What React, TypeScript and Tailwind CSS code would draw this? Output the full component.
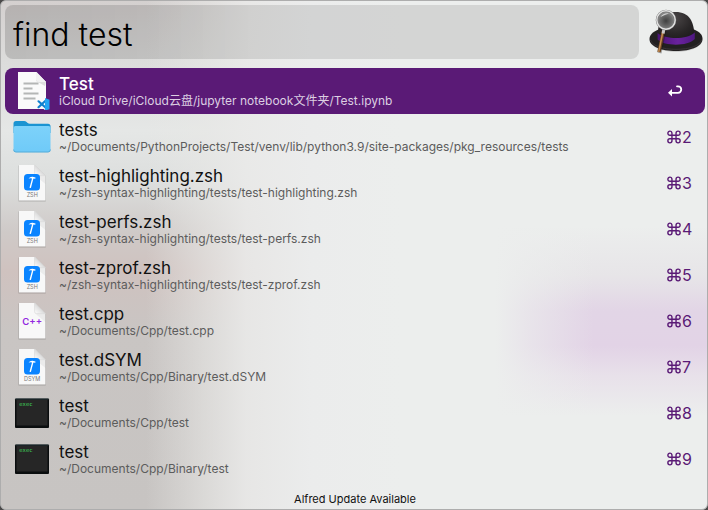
import { useState, type ReactNode } from "react";

type Kind = "notebook" | "folder" | "zsh" | "cpp" | "dsym" | "exec";

interface Result {
  title: string;
  path: string;
  kind: Kind;
}

const results: Result[] = [
  { title: "Test", path: "iCloud Drive/iCloud云盘/jupyter notebook文件夹/Test.ipynb", kind: "notebook" },
  { title: "tests", path: "~/Documents/PythonProjects/Test/venv/lib/python3.9/site-packages/pkg_resources/tests", kind: "folder" },
  { title: "test-highlighting.zsh", path: "~/zsh-syntax-highlighting/tests/test-highlighting.zsh", kind: "zsh" },
  { title: "test-perfs.zsh", path: "~/zsh-syntax-highlighting/tests/test-perfs.zsh", kind: "zsh" },
  { title: "test-zprof.zsh", path: "~/zsh-syntax-highlighting/tests/test-zprof.zsh", kind: "zsh" },
  { title: "test.cpp", path: "~/Documents/Cpp/test.cpp", kind: "cpp" },
  { title: "test.dSYM", path: "~/Documents/Cpp/Binary/test.dSYM", kind: "dsym" },
  { title: "test", path: "~/Documents/Cpp/test", kind: "exec" },
  { title: "test", path: "~/Documents/Cpp/Binary/test", kind: "exec" },
];

function Page({ children }: { children?: ReactNode }) {
  return (
    <svg viewBox="0 0 38 38" className="size-[38px]" aria-hidden="true">
      <defs>
        <linearGradient id="fold" x1="0" y1="1" x2="1" y2="0">
          <stop offset="0" stopColor="#ffffff" />
          <stop offset="0.5" stopColor="#dcdcdc" />
          <stop offset="1" stopColor="#f4f4f4" />
        </linearGradient>
      </defs>
      <path d="M5.5 1.6h17.2l10 10.200V37.400H5.500z" fill="#000" opacity="0.18" />
      <path d="M6 1h16l10.400 10.500V36.500H6z" fill="#f8f8f8" />
      <path d="M22 11.500l10.400 0.500v8z" fill="#000" opacity="0.05" />
      <path d="M21.600 1l10.800 10.600h-8.800q-2 0-2-2z" fill="url(#fold)" stroke="#cfcfcf" strokeWidth="0.500" />
      {children}
    </svg>
  );
}

function XcodePage({ label }: { label: string }) {
  return (
    <Page>
      <rect x="11" y="10" width="16" height="16.500" rx="3.500" fill="#0a84ff" />
      <path d="M15.600 14.600q1.500-2.200 4-1.900l2.900 0.800-0.200 1.200-1.900-0.200-2.500 9.600-1.400-0.400 2.500-9.300q-1.400-0.600-3.400 0.200z" fill="#fff" />
      <text x="19.200" y="33.200" textAnchor="middle" fontSize="5.500" fill="#777" className="font-['Inter',sans-serif]">
        {label}
      </text>
    </Page>
  );
}

function FileIcon({ kind }: { kind: Kind }) {
  if (kind === "zsh") return <XcodePage label="ZSH" />;
  if (kind === "dsym") return <XcodePage label="DSYM" />;
  if (kind === "cpp")
    return (
      <Page>
        <text x="19.200" y="23" textAnchor="middle" fontSize="9.500" fontWeight="600" fill="#9327e0" className="font-['Inter',sans-serif]">
          C++
        </text>
      </Page>
    );
  if (kind === "notebook")
    return (
      <svg viewBox="0 0 38 38" className="size-[38px]" aria-hidden="true">
        <path d="M5 0h18.500L33 10v27H5z" fill="#fafafa" />
        <path d="M23.500 0L33 10l-1 4-9-5z" fill="#ddd" />
        <path d="M23 0l10 10h-7q-3 0-3-3z" fill="#f1f1f1" />
        <path d="M10.500 11.500h15M10.500 16.500h9M10.500 21.500h15M10.500 26.500h12" stroke="#b4b6b5" strokeWidth="2" />
        <path d="M32.500 26v12.500l-7.500-6.300z" fill="#f7fafc" />
        <path d="M25.500 29.300L32.500 35.500M25.500 35.200l7-6.500" stroke="#0f80cf" strokeWidth="2.200" strokeLinecap="round" />
        <path d="M32 26l4.500 1.800v9.400L32 38.500z" fill="#23a5f3" />
      </svg>
    );
  if (kind === "folder")
    return (
      <svg viewBox="0 0 38 38" className="size-[38px]" aria-hidden="true">
        <defs>
          <linearGradient id="folder" x1="0" y1="0" x2="0" y2="1">
            <stop offset="0" stopColor="#7dd2fa" />
            <stop offset="1" stopColor="#6fcaf8" />
          </linearGradient>
        </defs>
        <path d="M0.500 5.500q0-2.500 2.500-2.500h8q1.600 0 2.600 1l1 1q0.900 0.800 2.400 0.800H35q2.500 0 2.500 2.500V15h-37z" fill="#1b94d2" />
        <path d="M0.500 10q0-2 2-2h33q2 0 2 2V32q0 2.300-2.300 2.300H2.800Q0.500 34.300 0.500 32z" fill="url(#folder)" />
        <path d="M0.600 31.500q0 2.500 2.300 2.500h32.200q2.300 0 2.300-2.500" fill="none" stroke="#4fa5d0" strokeWidth="0.800" />
      </svg>
    );
  return (
    <svg viewBox="0 0 38 38" className="size-[38px]" aria-hidden="true">
      <rect x="2" y="4.500" width="34" height="29.500" rx="1" fill="#0a0d0e" />
      <rect x="3.500" y="6" width="31" height="25.500" fill="#262626" />
      <path d="M2.500 5h33" stroke="#35494f" strokeWidth="0.800" />
      <text x="6.300" y="12" fontSize="5.500" fill="#41d65c" className="font-['DejaVu_Sans_Mono',monospace]">
        exec
      </text>
    </svg>
  );
}

function AlfredHat() {
  return (
    <svg viewBox="0 0 54 46" className="h-[46px] w-[54px]" aria-hidden="true">
      <defs>
        <radialGradient id="crown" cx="0.450" cy="0.200" r="0.800">
          <stop offset="0" stopColor="#4a4647" />
          <stop offset="0.600" stopColor="#292627" />
          <stop offset="1" stopColor="#1a1819" />
        </radialGradient>
        <radialGradient id="lens" cx="0.500" cy="0.550" r="0.600">
          <stop offset="0" stopColor="#404040" />
          <stop offset="0.600" stopColor="#707070" />
          <stop offset="1" stopColor="#b5b5b5" />
        </radialGradient>
        <linearGradient id="band" x1="0" y1="0" x2="1" y2="0">
          <stop offset="0" stopColor="#491475" />
          <stop offset="0.550" stopColor="#6a229e" />
          <stop offset="1" stopColor="#4e1880" />
        </linearGradient>
      </defs>
      <ellipse cx="27" cy="31" rx="26.500" ry="12" fill="#9a9a9a" opacity="0.400" />
      <path d="M0.500 30c0-4 3-7 9-9.500h35.500c6 2.500 8.500 5.500 8.500 9.300C53.500 37.500 42 42 27 42S0.500 37.500 0.500 30z" fill="#222021" />
      <path d="M1.500 31c2 6 12 9.300 25.500 9.300s23.500-3.300 25.500-9.300" fill="none" stroke="#3d393b" strokeWidth="0.800" />
      <path d="M9 30C8 15 12 3.500 25.500 3 40 2.500 45.500 12 45.500 29c-3 7-32.500 7.500-36.500 1z" fill="url(#crown)" />
      <path d="M8.600 24c8 6.500 29 7 37.200-0.500v6.500c-7 7.500-30 7.500-37.200 0.500z" fill="url(#band)" />
      <path d="M16 18l-5.500 26" stroke="#111" strokeWidth="4" opacity="0.350" />
      <path d="M14.300 22L10 43" stroke="#65401f" strokeWidth="3.400" />
      <path d="M14 22L9.700 43" stroke="#c28a52" strokeWidth="1.500" />
      <path d="M15 19.500l-0.900 5" stroke="#c9c9c9" strokeWidth="3" />
      <circle cx="17" cy="11" r="9" fill="url(#lens)" stroke="#777" strokeWidth="2.600" />
      <circle cx="17" cy="11" r="9.200" fill="none" stroke="#e2e2e2" strokeWidth="1.400" />
      <path d="M11.500 8q3-4.500 8.500-3.500-4 1-8.500 3.500z" fill="#fff" opacity="0.650" />
    </svg>
  );
}

function ReturnGlyph() {
  return (
    <svg viewBox="0 0 16 12" className="h-3 w-4" fill="none" aria-label="Return">
      <path d="M10 1.300h1a3.200 3.200 0 0 1 0 6.500H3" stroke="#fff" strokeWidth="1.800" strokeLinecap="round" />
      <path d="M5 4L1 7.800l4 3.800z" fill="#fff" />
    </svg>
  );
}

function CommandGlyph() {
  return (
    <svg viewBox="0 0 24 24" className="size-[14px]" fill="none" stroke="currentColor" strokeWidth="2.400" aria-label="Command">
      <path d="M15.500 5.500v13a3.500 3.500 0 1 0 3.500-3.500h-14A3.500 3.500 0 1 0 8.500 18.500v-13A3.500 3.500 0 1 0 5 9h14A3.500 3.500 0 1 0 15.500 5.500z" />
    </svg>
  );
}

export default function App() {
  const [query, setQuery] = useState("find test");
  const [selected, setSelected] = useState(0);

  return (
    <div className="min-h-screen bg-[#4b4a4a] font-['Inter','Noto_Sans_CJK_SC',sans-serif]">
      <main className="flex min-h-screen flex-col rounded-md border border-[#adadad] bg-[#eceeed] bg-[linear-gradient(to_right,transparent_0,transparent_145px,#e8e8e699_205px,#eaeae9e6_245px,#ebecec_310px,#eceeed_400px,#eceeed_70%,#eceeed99_75%,transparent_84%),linear-gradient(to_bottom,#eceeed_0,#eceeed_225px,#e7e5e8_275px,#e2d5e6_310px,#e2d3e6_345px,#e8e1ea_375px,#eceeed_415px),linear-gradient(to_bottom,#d4d0cf_0,#dcdcdb_60px,#e5e7e6_130px,#dcdedd_180px,#cfcac8_230px,#cfc2bf_270px,#c9c5c3_330px,#c7c4c2_100%)] bg-no-repeat pt-1 pr-[2px] pl-1 [background-position:0_0,100%_0,0_0] [background-size:100%_100%,40%_100%,100%_100%]">
        <header className="flex items-center gap-2">
          <input
            type="text"
            aria-label="Search"
            value={query}
            onChange={(e) => setQuery(e.target.value)}
            className="h-[54px] min-w-0 flex-1 rounded-lg bg-black/10 bg-linear-to-r from-black/5 to-transparent to-40% px-2 pt-1 text-[32px] font-light text-black outline-none"
          />
          <div className="flex w-[58px] justify-center">
            <AlfredHat />
          </div>
        </header>

        <ul className="mt-[9px]">
          {results.map((item, i) => {
            const active = i === selected;
            return (
              <li key={item.path}>
                <button
                  type="button"
                  onClick={() => setSelected(i)}
                  className={`flex h-[46px] w-full items-center rounded-lg pr-3 pl-2 text-left ${active ? "bg-[#5a1a76]" : ""}`}
                >
                  <FileIcon kind={item.kind} />
                  <span className="ml-2 flex min-w-0 flex-1 flex-col">
                    <span className={`truncate text-[17px] leading-5 ${active ? "font-medium text-white" : "text-[#111]"}`}>{item.title}</span>
                    <span className={`truncate text-xs leading-[14px] ${active ? "text-[#dccfe2]" : "text-[#5c5c5c]"}`}>{item.path}</span>
                  </span>
                  <span className="flex w-[26px] items-center gap-px text-base text-[#5a1a76]">
                    {active ? (
                      <ReturnGlyph />
                    ) : (
                      <>
                        <CommandGlyph />
                        {i + 1}
                      </>
                    )}
                  </span>
                </button>
              </li>
            );
          })}
        </ul>

        <footer className="mt-2 flex justify-center">
          <button type="button" className="text-[11px] leading-[18px] text-[#111]">
            Alfred Update Available
          </button>
        </footer>
      </main>
    </div>
  );
}
